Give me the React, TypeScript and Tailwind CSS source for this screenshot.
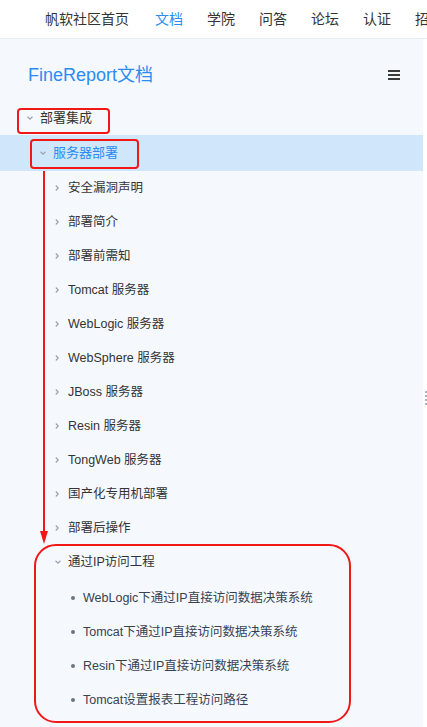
import React from 'react'

const FONT = { fontFamily: '"Liberation Sans", Arial, "Noto Sans CJK SC", sans-serif' }

const navItems = ['帆软社区首页', '文档', '学院', '问答', '论坛', '认证', '招聘']

const children = [
  '安全漏洞声明',
  '部署简介',
  '部署前需知',
  'Tomcat 服务器',
  'WebLogic 服务器',
  'WebSphere 服务器',
  'JBoss 服务器',
  'Resin 服务器',
  'TongWeb 服务器',
  '国产化专用机部署',
  '部署后操作',
]

const ipItems = [
  'WebLogic下通过IP直接访问数据决策系统',
  'Tomcat下通过IP直接访问数据决策系统',
  'Resin下通过IP直接访问数据决策系统',
  'Tomcat设置报表工程访问路径',
]

function Chevron({ down }: { down?: boolean }) {
  return (
    <svg width="8" height="8" viewBox="0 0 8 8" className="shrink-0">
      {down ? (
        <polyline points="1.5,2.8 4,5.2 6.5,2.8" fill="none" stroke="#9aa3ad" strokeWidth="1.2" />
      ) : (
        <polyline points="2.8,1.5 5.2,4 2.8,6.5" fill="none" stroke="#9aa3ad" strokeWidth="1.2" />
      )}
    </svg>
  )
}

export default function App() {
  return (
    <div className="relative w-[427px] h-[727px] overflow-hidden bg-white text-[#333]" style={FONT}>
      {/* top nav */}
      <div className="h-[39px] border-b border-[#e6ecf3] flex items-center pl-[45px] gap-[24px] text-[14px] whitespace-nowrap">
        {navItems.map((n, i) => (
          <span key={n} className={(n === '文档' ? 'text-[#2a8cf2]' : 'text-[#333]') + (i === 0 ? ' mr-[2px]' : '')}>{n}</span>
        ))}
      </div>

      <div className="flex h-[688px]">
        <aside className="w-[423px] bg-[#f5f9fe] flex flex-col">
          <div className="flex items-center justify-between pl-[28px] pr-[23px] pt-[25px] pb-[15px]">
            <span className="text-[18px] leading-[22px] text-[#2a8cf2]">FineReport文档</span>
            <span className="flex flex-col gap-[2.3px] w-[12px]">
              <span className="h-[2px] bg-[#3a3a3a]" />
              <span className="h-[2px] bg-[#3a3a3a]" />
              <span className="h-[2px] bg-[#3a3a3a]" />
            </span>
          </div>

          <div className="text-[12.5px]">
            <div className="h-[34px] flex items-center pl-[26px] gap-[6px] text-[13px]">
              <Chevron down />
              <span>部署集成</span>
            </div>
            <div className="h-[36px] flex items-center pl-[39px] gap-[6px] bg-[#d0e7fb] text-[#2a8cf2] text-[13px]">
              <Chevron down />
              <span>服务器部署</span>
            </div>
            {children.map(c => (
              <div key={c} className="h-[34px] flex items-center pl-[53px] gap-[7px]">
                <Chevron />
                <span>{c}</span>
              </div>
            ))}
            <div className="h-[34px] flex items-center pl-[54px] gap-[6px]">
              <Chevron down />
              <span>通过IP访问工程</span>
            </div>
            <div className="pt-[2px]">
              {ipItems.map(c => (
                <div key={c} className="h-[34px] flex items-center pl-[71px] gap-[8px] text-[#384250]">
                  <span className="w-[4px] h-[4px] rounded-full bg-[#6b7482] shrink-0" />
                  <span className="whitespace-nowrap">{c}</span>
                </div>
              ))}
            </div>
          </div>
        </aside>
        <div className="w-[4px] bg-white flex items-center">
          <div className="flex flex-col gap-[2px] pl-[2px] mt-[30px]">
            <span className="w-[2px] h-[2px] bg-[#aab4c0]" />
            <span className="w-[2px] h-[2px] bg-[#aab4c0]" />
            <span className="w-[2px] h-[2px] bg-[#aab4c0]" />
            <span className="w-[2px] h-[2px] bg-[#aab4c0]" />
          </div>
        </div>
      </div>

      {/* red annotations */}
      <div className="absolute left-[17px] top-[108px] w-[93px] h-[26px] border-2 border-[#f01818] rounded-[4px]" />
      <div className="absolute left-[30px] top-[139px] w-[109px] h-[30px] border-2 border-[#f01818] rounded-[4px]" />
      <div className="absolute left-[43px] top-[171px] w-[2px] h-[362px] bg-[#f01818]" />
      <svg className="absolute left-[39px] top-[531px]" width="10" height="14" viewBox="0 0 10 14">
        <polygon points="1,0 9,0 5,13" fill="#f01818" />
      </svg>
      <div className="absolute left-[34px] top-[544px] w-[317px] h-[179px] border-2 border-[#f01818] rounded-[22px]" />
    </div>
  )
}
